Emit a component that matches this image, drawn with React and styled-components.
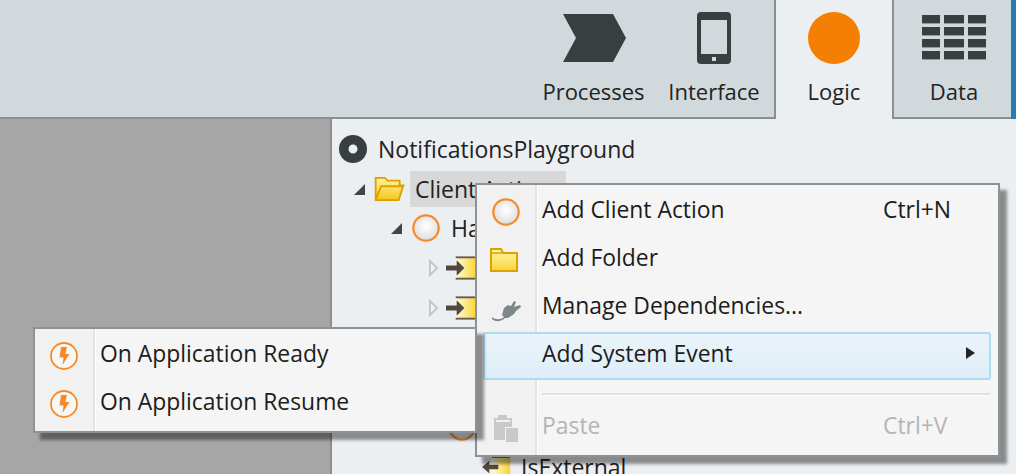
import styled, { createGlobalStyle } from "styled-components";

const GlobalStyle = createGlobalStyle`
  html, body {
    margin: 0;
    padding: 0;
    width: 1016px;
    height: 474px;
    overflow: hidden;
    font-family: "Open Sans", "Liberation Sans", sans-serif;
  }
`;

const Page = styled.div`
  position: relative;
  width: 1016px;
  height: 474px;
  overflow: hidden;
  display: flex;
  flex-direction: column;
  background: #ebeff2;
`;

const Toolbar = styled.div`
  height: 119px;
  flex: none;
  display: flex;
  justify-content: flex-end;
  box-sizing: border-box;
  background: #d1d9dc;
  border-right: 5px solid #2a7ab8;
`;

const ToolbarFill = styled.div`
  flex: 1;
  border-bottom: 2px solid #8a8f91;
`;

const Tab = styled.div`
  width: ${(p) => p.$width}px;
  box-sizing: border-box;
  display: flex;
  flex-direction: column;
  align-items: center;
  padding-top: 12px;
  padding-left: ${(p) => p.$pad || 0}px;
  background: ${(p) => (p.$active ? "#ebeff2" : "#d1d9dc")};
  border-bottom: ${(p) => (p.$active ? "none" : "2px solid #8a8f91")};
  border-left: ${(p) => (p.$active ? "2px solid #8a8f91" : "none")};
  border-right: ${(p) => (p.$active ? "2px solid #8a8f91" : "none")};
`;

const TabIcon = styled.div`
  height: 52px;
  display: flex;
  align-items: center;
  justify-content: center;
`;

const TabLabel = styled.span`
  margin-top: 12px;
  font-size: 22px;
  line-height: 30px;
  color: #222;
`;

const Content = styled.div`
  flex: 1;
  display: flex;
  min-height: 0;
`;

const LeftPane = styled.div`
  width: 330px;
  flex: none;
  background: #a6a6a6;
  border-right: 2px solid #8a8f91;
`;

const Tree = styled.div`
  flex: 1;
  padding-top: 10px;
  display: flex;
  flex-direction: column;
`;

const TreeRow = styled.div`
  height: 39.8px;
  flex: none;
  display: flex;
  align-items: center;
  padding-left: ${(p) => p.$indent}px;
`;

const Expander = styled.span`
  width: 26px;
  flex: none;
  box-sizing: border-box;
  padding-left: 4px;
  display: flex;
  align-items: center;
  justify-content: flex-start;
`;

const TreeIcon = styled.span`
  width: ${(p) => p.$width || 30}px;
  height: 30px;
  flex: none;
  display: flex;
  align-items: center;
  justify-content: center;
`;

const TreeText = styled.span`
  margin-left: 5px;
  padding: 0 5px;
  font-size: 23px;
  line-height: 36px;
  color: #222;
  white-space: nowrap;
  background: ${(p) => (p.$selected ? "#d8d8d8" : "transparent")};
  min-width: ${(p) => (p.$selected ? "146px" : "0")};
`;

const Menu = styled.div`
  position: absolute;
  left: ${(p) => p.$left}px;
  top: ${(p) => p.$top}px;
  width: ${(p) => p.$width}px;
  box-sizing: border-box;
  padding: 3px 7px 3px 0;
  background:
    linear-gradient(90deg, #f1f1f1 0 58px, #e4e4e4 58px 60px, #ffffff 60px 61px, transparent 61px),
    #f5f5f5;
  border: 2px solid #8f9193;
  box-shadow: 7px 7px 3px rgba(0, 0, 0, 0.42);
  z-index: ${(p) => p.$z};
`;

const MenuRow = styled.div`
  height: 48px;
  box-sizing: border-box;
  display: flex;
  align-items: center;
  margin-left: ${(p) => (p.$hot ? "6px" : "0")};
  border: ${(p) => (p.$hot ? "2px solid #aedcf3" : "none")};
  border-radius: 3px;
  background: ${(p) => (p.$hot ? "linear-gradient(#eaf3f9, #deeef7)" : "transparent")};
  color: ${(p) => (p.$off ? "#b4b4b4" : "#1c1c1c")};
  font-size: 22.9px;
`;

const MenuGutter = styled.span`
  width: ${(p) => p.$width || 60}px;
  flex: none;
  box-sizing: border-box;
  padding-right: ${(p) => (p.$width ? 0 : 2)}px;
  display: flex;
  align-items: center;
  justify-content: center;
`;

const MenuLabel = styled.span`
  flex: 1;
  padding-left: 5px;
  margin-bottom: 6px;
  white-space: nowrap;
`;

const Shortcut = styled.span`
  width: 108px;
  flex: none;
  margin-bottom: 6px;
  white-space: nowrap;
`;

const SubArrow = styled.span`
  width: 0;
  height: 0;
  margin: 0 14px 6px 0;
  border-left: 9px solid #222;
  border-top: 6px solid transparent;
  border-bottom: 6px solid transparent;
`;

const MenuSeparator = styled.div`
  height: 2px;
  margin: 13px 1px 8px 65px;
  background: #e0e0e0;
  border-bottom: 1px solid #fff;
`;

const ProcessIcon = () => (
  <svg width="66" height="50" viewBox="0 0 66 50">
    <path d="M2 1H52L65 25L52 49H2L15 25Z" fill="#383f41" />
  </svg>
);

const PhoneIcon = () => (
  <svg width="36" height="52" viewBox="0 0 36 52">
    <rect x="1" y="0" width="34" height="52" rx="4" fill="#383f41" />
    <rect x="5" y="8" width="26" height="34" fill="#d1d9dc" />
    <rect x="16" y="45" width="4" height="4" fill="#d1d9dc" />
  </svg>
);

const GridIcon = () => (
  <svg width="64" height="46" viewBox="0 0 64 46">
    {[0, 12, 24, 36].map((y) =>
      [0, 22, 46].map((x) => (
        <rect key={`${x}-${y}`} x={x} y={y} width={x === 22 ? 20 : 18} height="8.4" fill="#383f41" />
      ))
    )}
  </svg>
);

const OrangeDot = () => (
  <svg width="52" height="52" viewBox="0 0 52 52">
    <circle cx="26" cy="26" r="26" fill="#f57f02" />
  </svg>
);

const ModuleIcon = () => (
  <svg width="28" height="28" viewBox="0 0 28 28">
    <circle cx="14" cy="14" r="9.25" fill="none" stroke="#383f41" strokeWidth="9.5" />
  </svg>
);

const ActionIcon = () => (
  <svg width="30" height="30" viewBox="0 0 30 30">
    <defs>
      <radialGradient id="orb" cx="50%" cy="42%" r="60%">
        <stop offset="0%" stopColor="#ffffff" />
        <stop offset="100%" stopColor="#dcdcdc" />
      </radialGradient>
    </defs>
    <circle cx="15" cy="15" r="12.7" fill="url(#orb)" stroke="#f58a2c" strokeWidth="2.2" />
  </svg>
);

const OpenFolderIcon = () => (
  <svg width="32" height="24" viewBox="0 0 32 26">
    <defs>
      <linearGradient id="openF" x1="0" y1="0" x2="0" y2="1">
        <stop offset="0%" stopColor="#fff3a0" />
        <stop offset="100%" stopColor="#f7c61c" />
      </linearGradient>
    </defs>
    <path d="M1 25V1H11L14 4H27V9H31L26 25Z" fill="url(#openF)" stroke="#dda100" strokeWidth="2" />
    <path d="M1 25L7 10H31" fill="none" stroke="#dda100" strokeWidth="2" />
  </svg>
);

const FolderIcon = () => (
  <svg width="32" height="24" viewBox="0 0 32 24">
    <defs>
      <linearGradient id="closedF" x1="0" y1="0" x2="0" y2="1">
        <stop offset="0%" stopColor="#fff7a8" />
        <stop offset="100%" stopColor="#fbd43c" />
      </linearGradient>
    </defs>
    <path d="M1 23V1H11L13 5H27V23Z" fill="url(#closedF)" stroke="#dda100" strokeWidth="2" />
    <path d="M1 5H13" stroke="#dda100" strokeWidth="1.5" />
  </svg>
);

const PlugIcon = () => (
  <svg width="32" height="30" viewBox="0 0 32 30">
    <path
      d="M2 24C5 27 11 27 14 24L12 22L14 15L18 12L21 13L24 8L26 9L24 14L30 12L31 14L26 18L24 21L18 25L15 25C11 29 5 29 2 26Z"
      fill="#7d8688"
    />
  </svg>
);

const PasteIcon = () => (
  <svg width="26" height="30" viewBox="0 0 26 30">
    <path d="M1 5H5V2H14V5H19V14H12V27H1Z" fill="#c9c9c9" />
    <rect x="3" y="7" width="14" height="2" fill="#f1f1f1" />
    <rect x="13" y="15" width="12" height="14" fill="#c9c9c9" />
  </svg>
);

const BoltIcon = () => (
  <svg width="30" height="30" viewBox="0 0 30 30">
    <circle cx="15" cy="15" r="13" fill="#f7f7f7" stroke="#f58a2c" strokeWidth="1.8" />
    <path d="M12 6H18L16.500 13H20.500L13.500 24L14.500 16.500H10.500Z" fill="#f58a2c" />
  </svg>
);

const ArrowBox = ({ out }) => {
  const gradientId = out ? "argOut" : "argIn";
  const boxX = out ? 11 : 10;
  return (
    <svg width="32" height="24" viewBox="0 0 32 24">
      <defs>
        <linearGradient id={gradientId} x1="0" y1="0" x2="1" y2="0">
          <stop offset="0%" stopColor="#fffbe0" />
          <stop offset="100%" stopColor="#fbd32c" />
        </linearGradient>
      </defs>
      <rect x={boxX} y="1" width={out ? 20 : 22} height="22" fill={`url(#${gradientId})`} />
      <rect x={boxX} y="0" width={out ? 20 : 22} height="2" fill="#6b5c50" />
      <rect x={boxX} y="22" width={out ? 20 : 22} height="2" fill="#6b5c50" />
      <path
        d={out ? "M0 12L8 5V9.500H18V14.500H8V19Z" : "M0 9.500H11V4L19 12L11 20V14.500H0Z"}
        fill="#54473f"
      />
    </svg>
  );
};

const Triangle = ({ open }) =>
  open ? (
    <svg width="14" height="14" viewBox="0 0 14 14">
      <path d="M13 2V13H2Z" fill="#444" />
    </svg>
  ) : (
    <svg width="18" height="18" viewBox="0 0 18 18">
      <path d="M6 2L13 9L6 16Z" fill="#f3f3f3" stroke="#c6c6c6" strokeWidth="2" />
    </svg>
  );

const treeRows = [
  { indent: 6, icon: <ModuleIcon />, text: "NotificationsPlayground", noExpander: true },
  { indent: 16, open: true, icon: <OpenFolderIcon />, width: 31, text: "Client Actions", selected: true },
  { indent: 53, open: true, icon: <ActionIcon />, text: "HandleNotification" },
  { indent: 88, icon: <ArrowBox />, width: 31, text: "Title" },
  { indent: 88, icon: <ArrowBox />, width: 31, text: "Message" },
  { indent: 88, icon: <ArrowBox />, width: 31, text: "Data" },
  { indent: 88, icon: <ArrowBox />, width: 31, text: "Token" },
  { indent: 115, icon: <ActionIcon />, text: "Start", noExpander: true },
  { indent: 150, icon: <ArrowBox out />, width: 29, text: "IsExternal", noExpander: true },
];

const tabs = [
  { label: "Processes", width: 121, icon: <ProcessIcon /> },
  { label: "Interface", width: 120, icon: <PhoneIcon /> },
  { label: "Logic", width: 120, icon: <OrangeDot />, active: true },
  { label: "Data", width: 117, pad: 3, icon: <GridIcon /> },
];

export default function App() {
  return (
    <Page>
      <GlobalStyle />
      <Toolbar>
        <ToolbarFill />
        {tabs.map((tab) => (
          <Tab key={tab.label} $width={tab.width} $pad={tab.pad} $active={tab.active}>
            <TabIcon>{tab.icon}</TabIcon>
            <TabLabel>{tab.label}</TabLabel>
          </Tab>
        ))}
      </Toolbar>
      <Content>
        <LeftPane />
        <Tree>
          {treeRows.map((row) => (
            <TreeRow key={row.text} $indent={row.indent}>
              {!row.noExpander && (
                <Expander>
                  <Triangle open={row.open} />
                </Expander>
              )}
              <TreeIcon $width={row.width}>{row.icon}</TreeIcon>
              <TreeText $selected={row.selected}>{row.text}</TreeText>
            </TreeRow>
          ))}
        </Tree>
      </Content>

      <Menu $left={475} $top={183} $width={525} $z={1}>
        <MenuRow>
          <MenuGutter>
            <ActionIcon />
          </MenuGutter>
          <MenuLabel>Add Client Action</MenuLabel>
          <Shortcut>Ctrl+N</Shortcut>
        </MenuRow>
        <MenuRow>
          <MenuGutter>
            <FolderIcon />
          </MenuGutter>
          <MenuLabel>Add Folder</MenuLabel>
        </MenuRow>
        <MenuRow>
          <MenuGutter>
            <PlugIcon />
          </MenuGutter>
          <MenuLabel>Manage Dependencies...</MenuLabel>
        </MenuRow>
        <MenuRow $hot>
          <MenuGutter $width={52} />
          <MenuLabel>Add System Event</MenuLabel>
          <SubArrow />
        </MenuRow>
        <MenuSeparator />
        <MenuRow $off>
          <MenuGutter>
            <PasteIcon />
          </MenuGutter>
          <MenuLabel>Paste</MenuLabel>
          <Shortcut>Ctrl+V</Shortcut>
        </MenuRow>
      </Menu>

      <Menu $left={33} $top={327} $width={444} $z={2}>
        <MenuRow>
          <MenuGutter>
            <BoltIcon />
          </MenuGutter>
          <MenuLabel>On Application Ready</MenuLabel>
        </MenuRow>
        <MenuRow>
          <MenuGutter>
            <BoltIcon />
          </MenuGutter>
          <MenuLabel>On Application Resume</MenuLabel>
        </MenuRow>
      </Menu>
    </Page>
  );
}
